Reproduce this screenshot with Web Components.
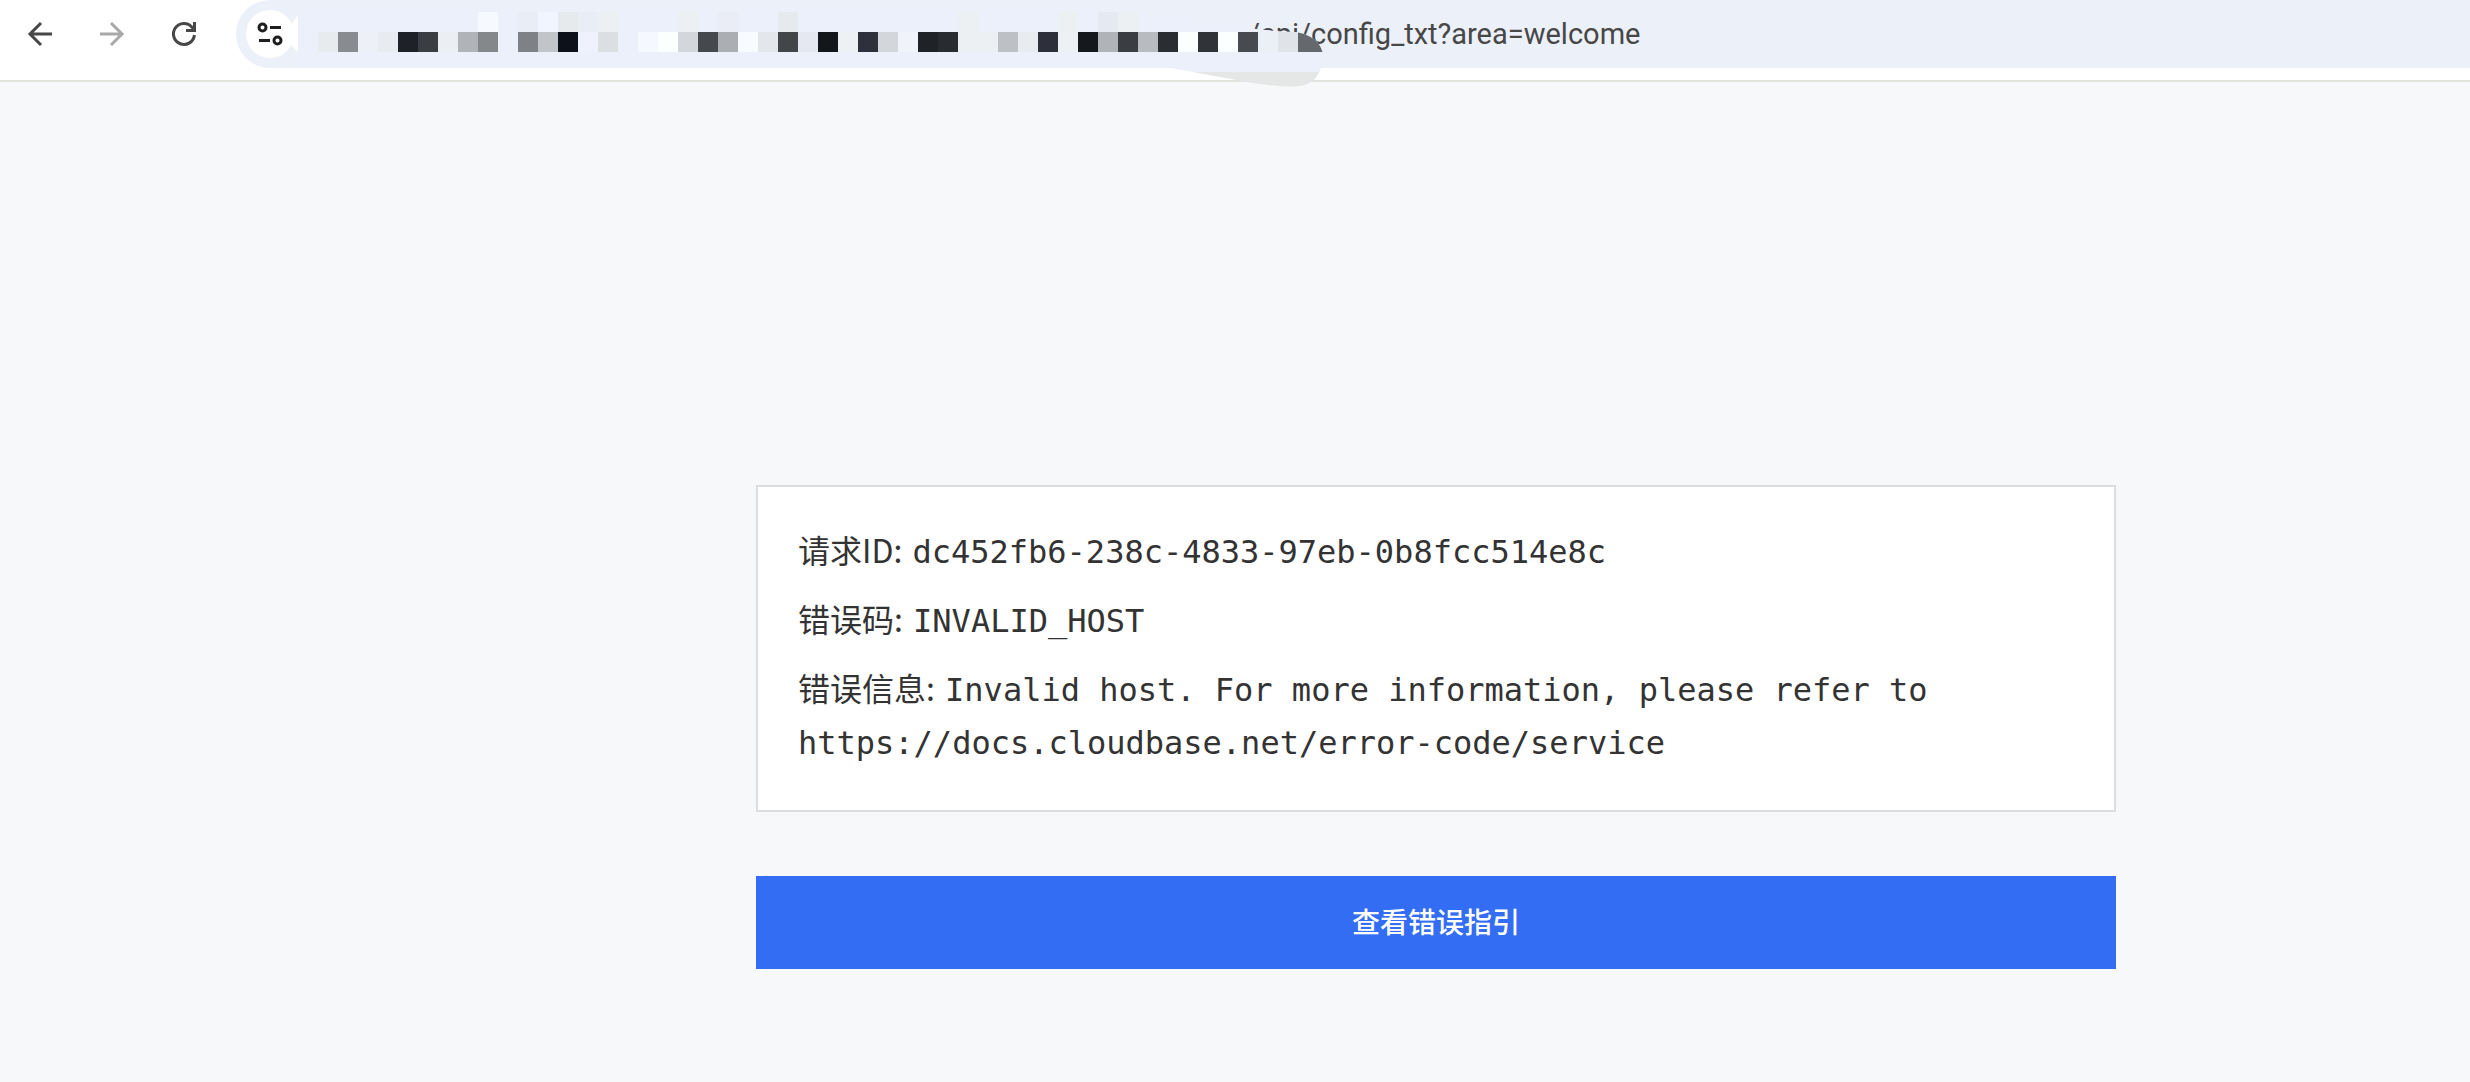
<!DOCTYPE html>
<html lang="zh-CN">
<head>
<meta charset="utf-8">
<meta name="viewport" content="width=device-width, initial-scale=1">
<title>INVALID_HOST</title>
<style>
  html, body { margin: 0; min-height: 100%; background: #f7f8fa; }
  body { font-family: "Noto Sans CJK SC", "Noto Sans", sans-serif; color: #333; }
</style>
</head>
<body>
<browser-toolbar>
  <address-bar url="/api/config_txt?area=welcome"></address-bar>
</browser-toolbar>
<error-page>
  <error-card>
    <error-field label="请求ID">dc452fb6-238c-4833-97eb-0b8fcc514e8c</error-field>
    <error-field label="错误码">INVALID_HOST</error-field>
    <error-field label="错误信息">Invalid host. For more information, please refer to https://docs.cloudbase.net/error-code/service</error-field>
  </error-card>
  <guide-link href="https://docs.cloudbase.net/error-code/service">查看错误指引</guide-link>
</error-page>

<script>
function define(name, markup, setup) {
  const template = document.createElement('template');
  template.innerHTML = markup;
  customElements.define(name, class extends HTMLElement {
    connectedCallback() {
      if (this.shadowRoot) return;
      this.attachShadow({ mode: 'open' }).append(template.content.cloneNode(true));
      if (setup) setup(this, this.shadowRoot);
    }
  });
}

define('browser-toolbar', `
  <style>
    :host { display: flex; align-items: flex-start; height: 80px; background: #fff; border-bottom: 2px solid #e1e3de; }
    nav { display: flex; gap: 24px; padding: 10px 28px 0 16px; }
    button { display: flex; align-items: center; justify-content: center; width: 48px; height: 48px; padding: 0; border: 0; background: none; color: #474747; }
    button:disabled { color: #a9a9a9; }
    svg { width: 24px; height: 24px; fill: none; stroke: currentColor; stroke-width: 3; overflow: visible; }
    ::slotted(*) { flex: 1; min-width: 0; }
  </style>
  <nav>
    <button type="button" aria-label="返回"><svg viewBox="0 0 24 24"><path d="M24 12H2M13 1 2 12l11 11"/></svg></button>
    <button type="button" aria-label="前进" disabled><svg viewBox="0 0 24 24"><path d="M0 12h22M11 1l11 11-11 11"/></svg></button>
    <button type="button" aria-label="重新加载"><svg viewBox="0 0 24 24"><path d="M22.4 13A10.5 10.5 0 1 1 20 5.200L22 8M22.500 0v8.500H14"/></svg></button>
  </nav>
  <slot></slot>
`);

const GRID_X = 318, CELL = 20;
const lowerCells = ['e8ebee','888b90','edf0f6','e8ebef','1e2228','3a3d41','ebeef3','b0b3b8','85888b','','7e8186','c1c4c9','0d1119','eff2fc','dcdfe2','','f5f9ff','fcffff','d3d6da','45484c','abaeb3','f8fcff','e3e6ea','434649','e5e8f1','13171c','edf1f4','2e313b','d3d6da','f0f4fa','1f2328','282b30','edf0f3','edf0f3','bdc0c5','e8ebef','2d303a','edf0f5','15191e','b0b3b8','3a3d41','b8bbbf','2a2d32','fcffff','303338','fcffff','474a4e','ebeff6','e0e3e8','65686c'];
const upperCells = { 8:'f6faff', 10:'e9eef6', 11:'f1f5ff', 12:'e6eaed', 13:'e9edf5', 14:'edf0f3', 18:'edf0f3', 20:'eaedf6', 23:'e6e9ed', 32:'edf0f3', 37:'edf0f3', 39:'e5e9f2', 40:'edf0f3' };

define('pixel-mask', `
  <style>
    :host { display: block; pointer-events: none; }
    svg { display: block; width: 1112px; height: 88px; }
  </style>
  <svg viewBox="236 0 1112 88" aria-hidden="true">
    <defs><clipPath id="blob"><path d="M298 10H1140L1249 28Q1270 31 1296 32Q1318 36 1322.500 52Q1324 84 1296 86.500Q1270 87 1236 80L1171 68H298Z"/></clipPath></defs>
    <path d="M290 26 298 15V52Q293 49 290 42Z" fill="#fff"/>
    <g clip-path="url(#blob)" shape-rendering="crispEdges">
      <path d="M298 10H1330V72H298Z" fill="#ecf0fa"/>
      <path d="M1158 72H1330V88H1158Z" fill="#e5e7e6"/>
      <g id="cells"></g>
    </g>
  </svg>
`, (host, root) => {
  const group = root.getElementById('cells');
  const add = (i, y, color) => {
    if (!color) return;
    const r = document.createElementNS('http://www.w3.org/2000/svg', 'rect');
    r.setAttribute('x', GRID_X + i * CELL);
    r.setAttribute('y', y);
    r.setAttribute('width', i === 49 ? 30 : CELL);
    r.setAttribute('height', CELL);
    r.setAttribute('fill', '#' + color);
    group.append(r);
  };
  lowerCells.forEach((c, i) => add(i, 32, c));
  Object.entries(upperCells).forEach(([i, c]) => add(+i, 12, c));
});

define('address-bar', `
  <style>
    :host { display: flex; align-items: center; position: relative; height: 68px; background: #ecf0f9; border-radius: 34px 0 0 34px; }
    button { display: flex; align-items: center; justify-content: center; flex: none; width: 48px; height: 48px; margin-left: 10px; padding: 0; border: 0; border-radius: 50%; background: #fff; color: #1f1f1f; }
    button svg { width: 24px; height: 24px; fill: none; stroke: currentColor; stroke-width: 3; overflow: visible; }
    input { flex: 1; min-width: 0; height: 40px; margin: 0; padding: 0 0 0 954px; box-sizing: border-box; border: 0; outline: 0; background: none; color: #474747; font: 29px/40px Roboto, sans-serif; }
    pixel-mask { position: absolute; left: 0; top: 0; }
  </style>
  <button type="button" aria-label="网站信息"><svg viewBox="0 0 24 24"><circle cx="4.500" cy="5.500" r="3.500"/><path d="M12 5.500h11M1 18.500h11"/><circle cx="19.500" cy="18.500" r="3.500"/></svg></button>
  <input type="text" aria-label="地址" spellcheck="false">
  <pixel-mask></pixel-mask>
`, (host, root) => { root.querySelector('input').value = host.getAttribute('url'); });

define('error-page', `
  <style>
    :host { display: grid; grid-template-columns: 756fr minmax(0, 1360px) 354fr; padding: 403px 0 113px; }
    main { grid-column: 2; display: flex; flex-direction: column; gap: 64px; }
  </style>
  <main><slot></slot></main>
`);

define('error-card', `
  <style>
    :host { display: flex; flex-direction: column; gap: 16px; padding: 36px 40px 43px; border: 2px solid #dcdddd; background: #fff; }
  </style>
  <slot></slot>
`);

define('error-field', `
  <style>
    :host { display: block; font-size: 32px; line-height: 53px; }
    p { margin: 0; }
    code { margin-left: 3px; font-family: "DejaVu Sans Mono", monospace; font-size: 32px; line-height: 32px; }
  </style>
  <p><span></span> <code><slot></slot></code></p>
`, (host, root) => { root.querySelector('span').textContent = host.getAttribute('label') + ':'; });

define('guide-link', `
  <style>
    :host { display: block; }
    a { display: block; padding: 25px 0 28px; background: #336df4; color: #fff; font-size: 28px; line-height: 40px; font-weight: 500; text-align: center; text-decoration: none; }
  </style>
  <a><slot></slot></a>
`, (host, root) => { root.querySelector('a').href = host.getAttribute('href'); });
</script>
</body>
</html>
